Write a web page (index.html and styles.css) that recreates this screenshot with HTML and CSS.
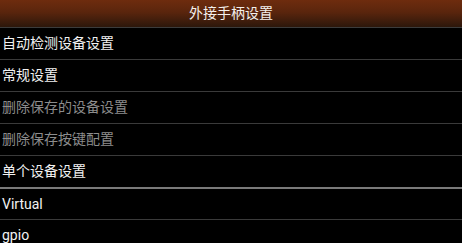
FILE: index.html
```html
<!DOCTYPE html>
<html>
<head>
<meta charset="utf-8">
<link rel="stylesheet" href="styles.css">
</head>
<body>
<div class="screen">
  <div class="header">外接手柄设置</div>
  <ul class="list">
    <li class="item">自动检测设备设置</li>
    <li class="item">常规设置</li>
    <li class="item disabled">删除保存的设备设置</li>
    <li class="item disabled">删除保存按键配置</li>
    <li class="item group-end">单个设备设置</li>
    <li class="item">Virtual</li>
    <li class="item">gpio</li>
  </ul>
</div>
</body>
</html>
```
FILE: styles.css
```css
html, body {
  margin: 0;
  padding: 0;
  background: #000;
}
.screen {
  width: 462px;
  height: 243px;
  overflow: hidden;
  background: #000;
  font-family: Roboto, "Noto Sans CJK SC", sans-serif;
  color: #f2f2f2;
}
.header {
  height: 27px;
  line-height: 27px;
  text-align: center;
  font-size: 14px;
  color: #f4f0ec;
  background: linear-gradient(#6e2c0e, #5a250d 45%, #2c170b);
  border-bottom: 1px solid #3c3c3c;
}
.list {
  list-style: none;
  margin: 0;
  padding: 0;
}
.item {
  height: 31px;
  line-height: 31px;
  font-size: 14px;
  padding-left: 2px;
  border-bottom: 1px solid #3a3a3a;
  white-space: nowrap;
}
.item.disabled {
  color: #8c8c8c;
}
.item.group-end {
  border-bottom: 2px solid #7a7a7a;
}
.item.group-end + .item {
  height: 30px;
  line-height: 30px;
}
```
